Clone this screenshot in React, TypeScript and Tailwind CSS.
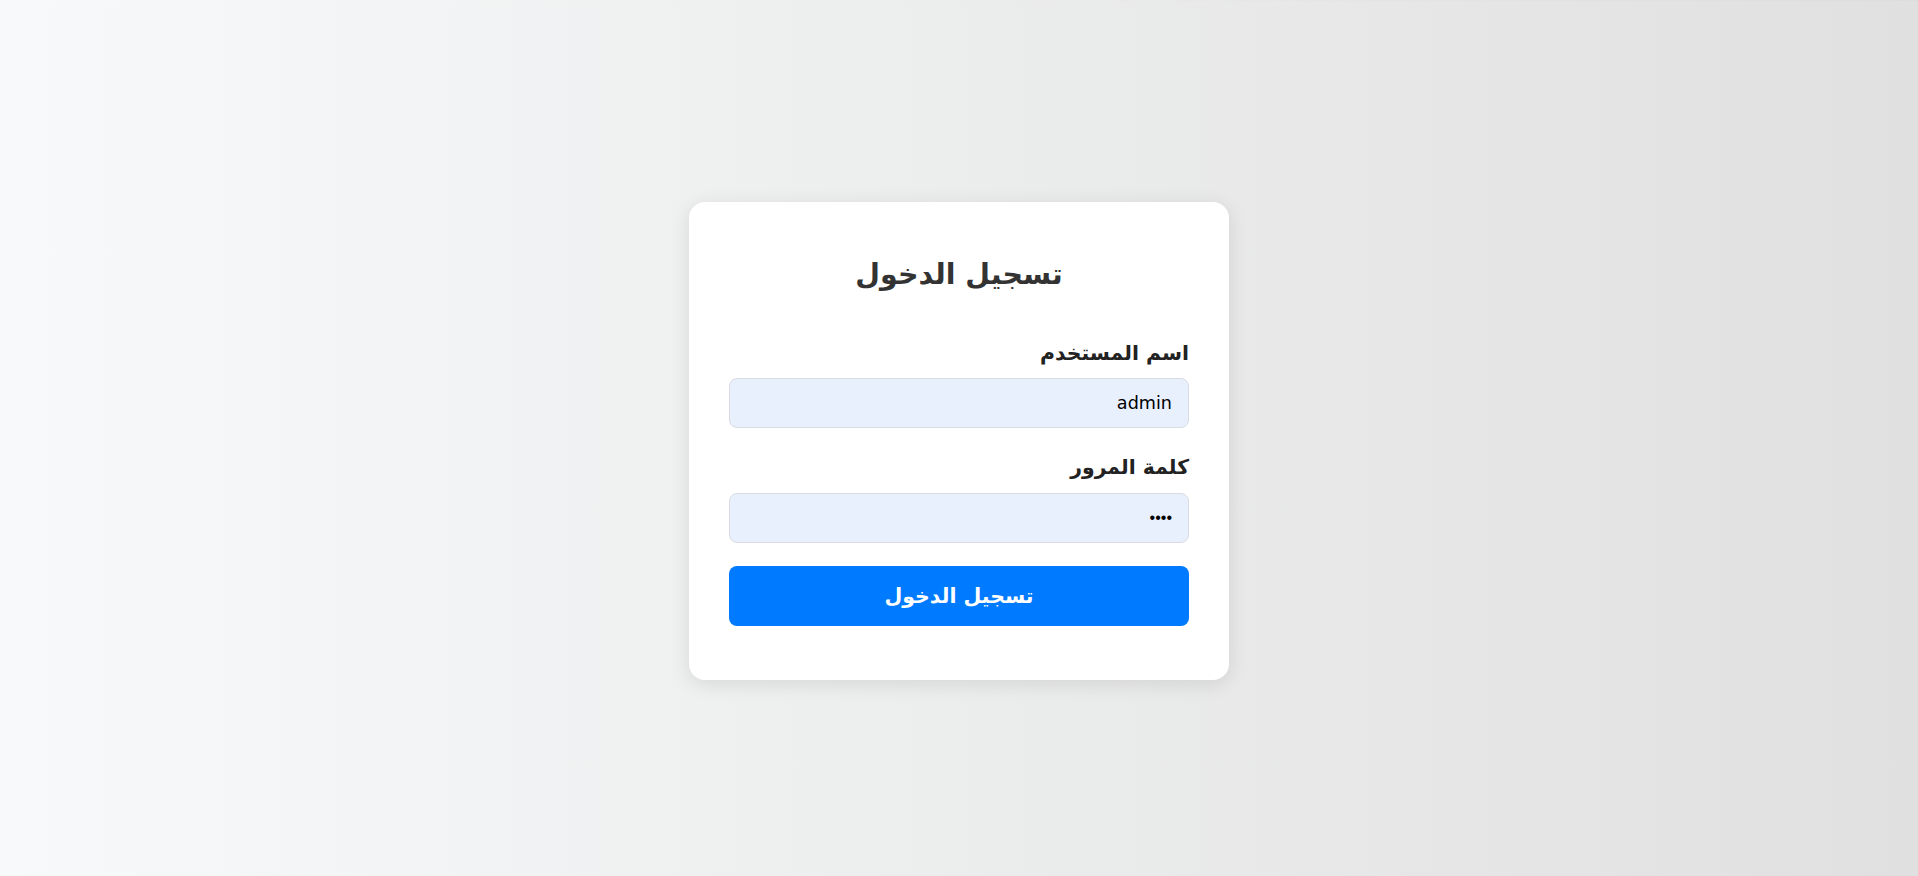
import React from "react";

export default function App() {
  return (
    <div
      dir="rtl"
      className="min-h-screen w-full flex flex-col bg-gradient-to-r from-[#f8f9fa] to-[#e0e0e0]"
      style={{ fontFamily: '"DejaVu Sans", sans-serif' }}
    >
      <div className="h-px w-full bg-gradient-to-l from-[#dcdedb] to-[#fafafa]" />
      <div className="flex-1 flex items-center justify-center pt-[5px]">
        <div className="w-[540px] bg-white rounded-2xl shadow-[0_4px_20px_rgba(0,0,0,0.1)] px-10 pt-10 pb-[54px]">
          <h2 className="text-center text-[28.5px] font-bold text-[#333] leading-[34px] mt-4 mb-[49px]">
            تسجيل الدخول
          </h2>
          <div className="mb-[27px]">
            <label className="block text-[20.4px] font-bold text-[#222] leading-6 mb-[13px]">
              اسم المستخدم
            </label>
            <input
              type="text"
              defaultValue="admin"
              className="block w-full h-[50px] px-4 text-[17.6px] text-black bg-[#e8f0fe] border border-[#d9dde3] rounded-lg outline-none"
              style={{ fontFamily: '"DejaVu Sans", sans-serif' }}
            />
          </div>
          <div className="mb-[23px]">
            <label className="block text-[20.4px] font-bold text-[#222] leading-6 mb-[14px]">
              كلمة المرور
            </label>
            <input
              type="password"
              defaultValue="1234"
              className="block w-full h-[50px] px-4 text-base text-black bg-[#e8f0fe] border border-[#d9dde3] rounded-lg outline-none"
              style={{ fontFamily: '"Liberation Sans", sans-serif' }}
            />
          </div>
          <button className="block w-full h-[60px] bg-[#007bff] text-white text-[20.5px] font-bold rounded-lg">
            تسجيل الدخول
          </button>
        </div>
      </div>
    </div>
  );
}
